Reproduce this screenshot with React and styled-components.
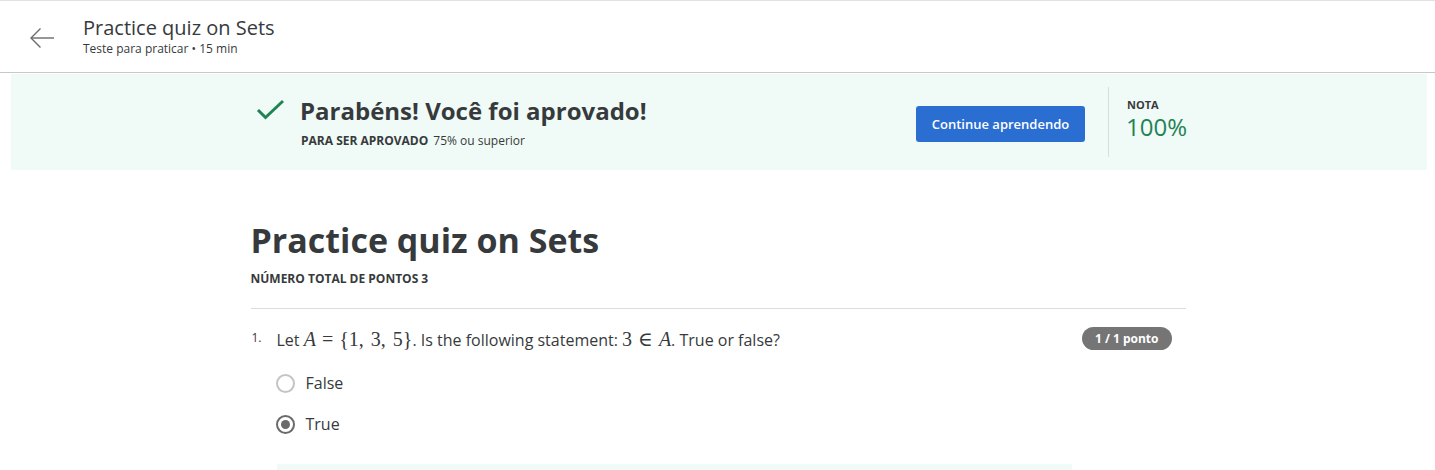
import React from "react";
import styled, { createGlobalStyle } from "styled-components";

const Global = createGlobalStyle`
  html, body { margin: 0; padding: 0; background: #fff; }
  body { font-family: "Open Sans", "Noto Sans", sans-serif; color: #373a3c; }
  * { box-sizing: border-box; }
`;

const Page = styled.div`
  width: 1435px;
  border-top: 1px solid #e1e1e1;
`;

const Header = styled.header`
  height: 72px;
  display: flex;
  align-items: center;
  border-bottom: 1px solid #c8c8c8;
  padding-left: 28px;
`;

const BackButton = styled.button`
  border: 0;
  background: none;
  padding: 0;
  width: 28px;
  height: 28px;
  display: flex;
  align-items: center;
  justify-content: center;
  color: #6b6b6b;
  margin-right: 27px;
  margin-top: 2px;
`;

const HeaderText = styled.div`
  display: flex;
  flex-direction: column;
  margin-top: -2px;
`;

const HeaderTitle = styled.div`
  font-size: 20px;
  line-height: 26px;
  color: #373a3c;
`;

const HeaderSub = styled.div`
  font-size: 12px;
  line-height: 16px;
  color: #373a3c;
`;

const Banner = styled.section`
  margin: 1px 8px 0 11px;
  height: 96px;
  background: #f0faf6;
  display: flex;
  justify-content: center;
  align-items: center;
`;

const Column = styled.div`
  width: 936px;
  margin: 0 auto;
`;

const BannerInner = styled(Column)`
  display: flex;
  align-items: center;
  padding-left: 5px;
`;

const BannerLeft = styled.div`
  flex: 1;
  display: flex;
  align-items: flex-start;
`;

const Check = styled.div`
  width: 30px;
  height: 30px;
  color: #1f8354;
  margin-right: 14px;
  margin-top: 2px;
`;

const BannerTexts = styled.div`
  display: flex;
  flex-direction: column;
`;

const BannerTitle = styled.h2`
  margin: 0;
  font-size: 24px;
  line-height: 32px;
  font-weight: 700;
  color: #373a3c;
`;

const Requirement = styled.div`
  font-size: 12px;
  line-height: 16px;
  margin-top: 6px;
  color: #373a3c;
  padding-left: 1px;
`;

const Bold = styled.span`
  font-weight: 700;
  margin-right: 5px;
`;

const PrimaryButton = styled.button`
  width: 169px;
  height: 36px;
  border: 0;
  border-radius: 3px;
  background: #2a6ed2;
  color: #fff;
  font-family: "Open Sans", sans-serif;
  font-size: 13px;
  font-weight: 600;
  margin-top: 4px;
`;

const Divider = styled.div`
  width: 1px;
  height: 70px;
  background: #d8dfdb;
  margin: 0 18px 0 23px;
`;

const Grade = styled.div`
  display: flex;
  flex-direction: column;
  width: 60px;
  margin-top: -6px;
`;

const GradeLabel = styled.div`
  font-size: 11px;
  font-weight: 700;
  line-height: 14px;
  color: #373a3c;
`;

const GradeValue = styled.div`
  font-size: 24px;
  line-height: 26px;
  margin-top: 2px;
  color: #1f8354;
  margin-left: -1px;
`;

const Main = styled(Column)`
  padding-top: 46px;
`;

const QuizTitle = styled.h1`
  margin: 0 0 0 1px;
  font-size: 34px;
  line-height: 48px;
  font-weight: 700;
  color: #373a3c;
`;

const Points = styled.div`
  font-size: 12px;
  font-weight: 700;
  line-height: 16px;
  margin-top: 7px;
  padding-left: 1px;
  color: #373a3c;
`;

const Rule = styled.hr`
  border: 0;
  border-top: 1px solid #dcdcdc;
  margin: 21px 0 0 1px;
`;

const QuestionRow = styled.div`
  display: flex;
  align-items: flex-start;
  margin-top: 18px;
  padding-left: 2px;
`;

const QNumber = styled.div`
  width: 25px;
  font-size: 12px;
  line-height: 22px;
  color: #373a3c;
`;

const QBody = styled.div`
  flex: 1;
`;

const QText = styled.div`
  font-size: 16px;
  line-height: 24px;
  color: #373a3c;
`;

const Math = styled.span`
  font-family: "Liberation Serif", "DejaVu Serif", serif;
  font-size: 20px;
  word-spacing: 2px;
`;

const MathI = styled.i`
  font-family: "Liberation Serif", "DejaVu Serif", serif;
  font-size: 20px;
`;

const MathOp = styled.span`
  font-family: "Liberation Serif", "DejaVu Serif", serif;
  font-size: 20px;
  margin: 0 ${(p) => p.$space || 6}px;
`;

const Pill = styled.div`
  height: 23px;
  padding: 0 13px;
  border-radius: 12px;
  background: #757575;
  color: #fff;
  font-size: 12px;
  font-weight: 700;
  line-height: 23px;
  margin-right: 14px;
  margin-top: 0px;
`;

const Options = styled.div`
  margin-top: 20px;
  display: flex;
  flex-direction: column;
  gap: 18px;
`;

const Option = styled.label`
  display: flex;
  align-items: center;
  gap: 11px;
  font-size: 16px;
  line-height: 23px;
  color: #373a3c;
`;

const Radio = styled.span`
  width: 19px;
  height: 19px;
  margin-left: -1px;
  border-radius: 50%;
  border: 2px solid ${(p) => (p.$checked ? "#6a6a6a" : "#c4c4c4")};
  display: flex;
  align-items: center;
  justify-content: center;
  &::after {
    content: "";
    width: 9px;
    height: 9px;
    border-radius: 50%;
    background: ${(p) => (p.$checked ? "#6a6a6a" : "transparent")};
  }
`;

const Feedback = styled.div`
  margin-top: 28px;
  width: 795px;
  height: 40px;
  background: #f0faf6;
`;

export default function App() {
  return (
    <Page>
      <Global />
      <Header>
        <BackButton aria-label="Voltar">
          <svg width="28" height="24" viewBox="0 0 28 24" fill="none" stroke="currentColor" strokeWidth="1.4">
            <path d="M26 12H3" />
            <path d="M12.5 2.5L3 12l9.5 9.5" />
          </svg>
        </BackButton>
        <HeaderText>
          <HeaderTitle>Practice quiz on Sets</HeaderTitle>
          <HeaderSub>Teste para praticar • 15 min</HeaderSub>
        </HeaderText>
      </Header>
      <Banner>
        <BannerInner>
          <BannerLeft>
            <Check>
              <svg width="30" height="30" viewBox="0 0 30 30" fill="none" stroke="currentColor" strokeWidth="3">
                <path d="M2 13l7.5 7.5L27 4" />
              </svg>
            </Check>
            <BannerTexts>
              <BannerTitle>Parabéns! Você foi aprovado!</BannerTitle>
              <Requirement>
                <Bold>PARA SER APROVADO</Bold>75% ou superior
              </Requirement>
            </BannerTexts>
          </BannerLeft>
          <PrimaryButton>Continue aprendendo</PrimaryButton>
          <Divider />
          <Grade>
            <GradeLabel>NOTA</GradeLabel>
            <GradeValue>100%</GradeValue>
          </Grade>
        </BannerInner>
      </Banner>
      <Main>
        <QuizTitle>Practice quiz on Sets</QuizTitle>
        <Points>NÚMERO TOTAL DE PONTOS 3</Points>
        <Rule />
        <QuestionRow>
          <QNumber>1.</QNumber>
          <QBody>
            <QText>
              Let <MathI>A</MathI><MathOp>=</MathOp><Math>{"{"}1, 3, 5{"}"}</Math>. Is the following statement:{" "}
              <Math>3</Math><MathOp $space={6}>∈</MathOp><MathI>A</MathI>. True or false?
            </QText>
            <Options>
              <Option>
                <Radio />
                False
              </Option>
              <Option>
                <Radio $checked />
                True
              </Option>
            </Options>
            <Feedback />
          </QBody>
          <Pill>1 / 1 ponto</Pill>
        </QuestionRow>
      </Main>
    </Page>
  );
}
